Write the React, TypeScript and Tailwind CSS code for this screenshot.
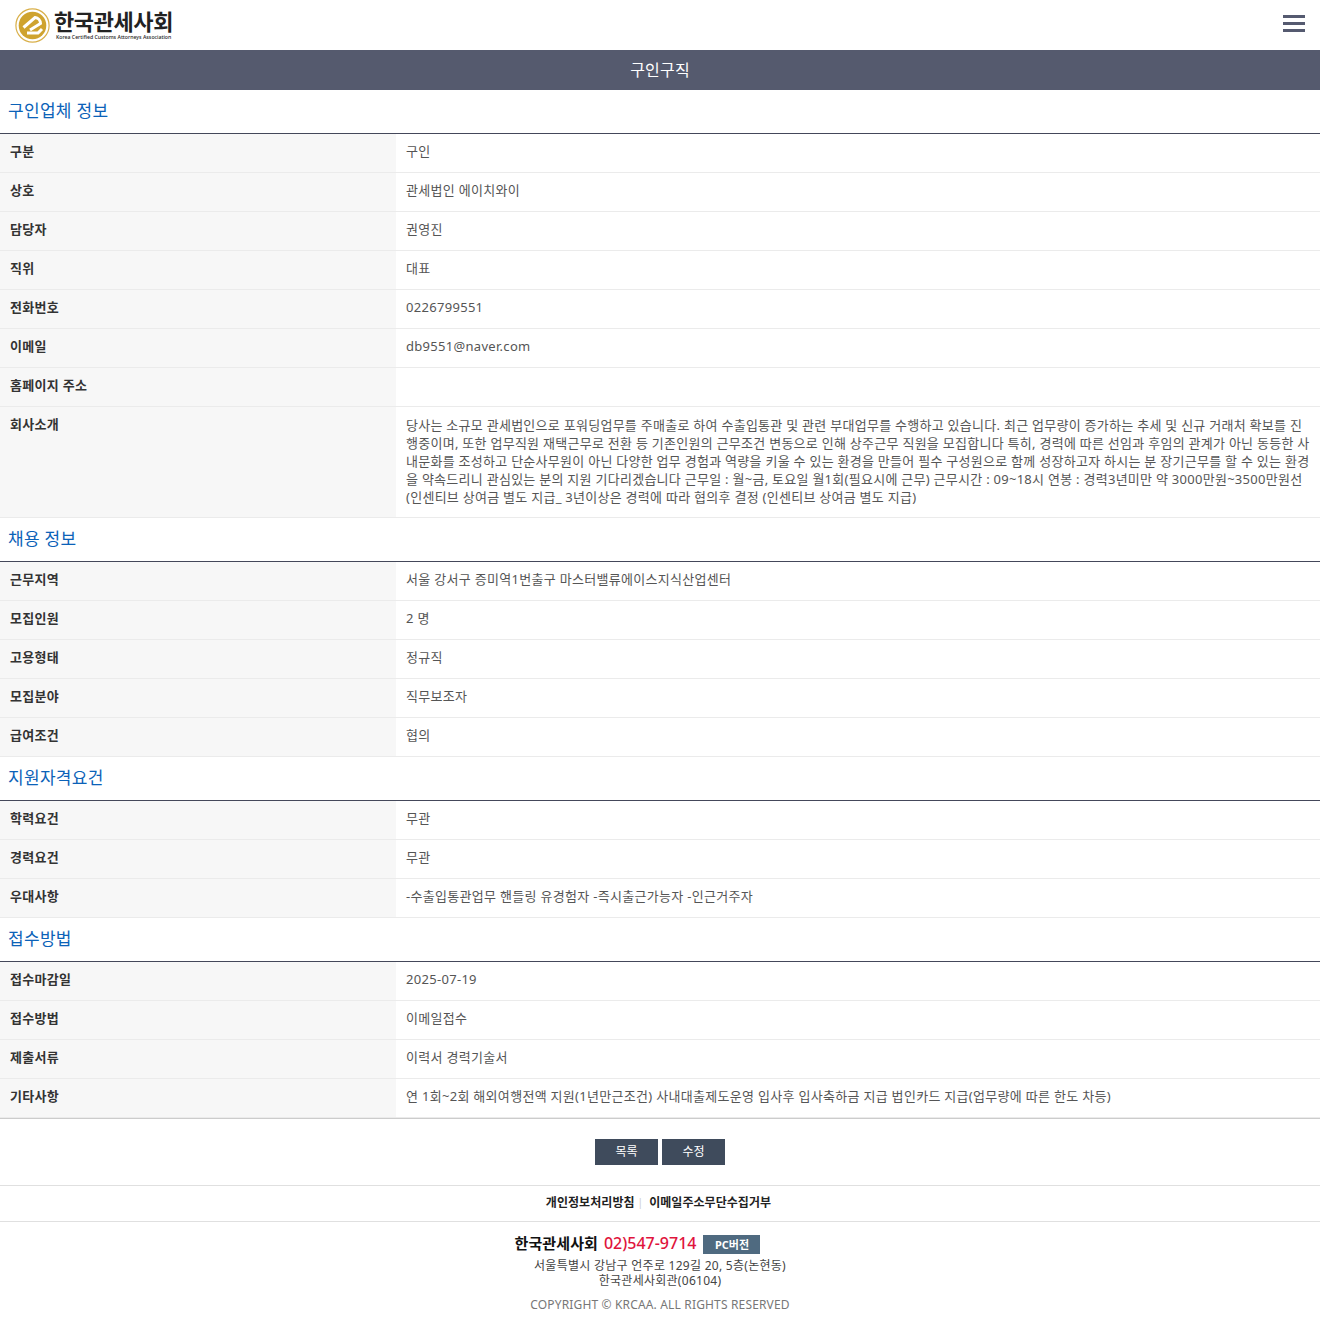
import React from "react";

const F = "font-['Noto_Sans','Noto_Sans_CJK_KR',sans-serif]";

function Row({ label, children, tall }: { label: string; children?: React.ReactNode; tall?: boolean }) {
  return (
    <div className="flex border-b border-[#ebebeb]">
      <div className="w-[396px] shrink-0 bg-[#f7f7f7] px-[10px] pt-[7px] pb-[11px] text-[13px] leading-[20px] font-bold text-[#333] tracking-[0.3px]">{label}</div>
      <div className={`flex-1 px-[10px] ${tall ? "pt-[9px] pb-[11px] leading-[18px] break-all tracking-[0.27px]" : "pt-[7px] pb-[11px] leading-[20px] tracking-[0.3px]"} text-[13px] text-[#555] min-h-[38px]`}>{children}</div>
    </div>
  );
}

function Section({ title, rows }: { title: string; rows: [string, string][] }) {
  return (
    <section>
      <h2 className="h-[44px] pl-2 text-[17px] leading-[42px] tracking-[0.3px] text-[#0b62b8] border-b border-[#44485a]">{title}</h2>
      {rows.map(([a, b]) => <Row key={a} label={a}>{b}</Row>)}
    </section>
  );
}

export default function App() {
  return (
    <div className={`${F} bg-white w-[1320px] h-[1326px] overflow-hidden`}>
      <header className="h-[50px] flex items-center justify-between pl-[15px] pr-[15px]">
        <div className="flex items-center gap-[4px]">
          <svg width="35" height="35" viewBox="0 0 35 35">
            <circle cx="17.5" cy="17.5" r="16.6" fill="#fff" stroke="#d9b04a" strokeWidth="1.2" />
            <circle cx="17.5" cy="17.5" r="13.8" fill="#cfa32f" />
            <path d="M8.5 19.5 L20 9.5 A6 6 0 0 1 25.5 15.5 L15 22" fill="none" stroke="#fff" strokeWidth="3" />
            <path d="M12 25 L23 25 L27 21" fill="none" stroke="#fff" strokeWidth="3" />
          </svg>
          <div className="w-[120px]">
            <div className="text-[22px] leading-[22px] font-semibold text-[#222] whitespace-nowrap tracking-[-0.4px]">한국관세사회</div>
            <div className="text-[5.2px] leading-[6px] mt-[2px] pl-[2px] font-medium text-[#222] whitespace-nowrap">Korea Certified Customs Attorneys Association</div>
          </div>
        </div>
        <div className="flex flex-col gap-[4px] mb-[3px]">
          <span className="block w-[22px] h-[3px] bg-[#555a70]" />
          <span className="block w-[22px] h-[3px] bg-[#555a70]" />
          <span className="block w-[22px] h-[3px] bg-[#555a70]" />
        </div>
      </header>
      <div className="h-[40px] bg-[#555a6e] text-white text-center text-[16px] leading-[40px] tracking-[0.2px]">구인구직</div>
      <Section title="구인업체 정보" rows={[["구분","구인"],["상호","관세법인 에이치와이"],["담당자","권영진"],["직위","대표"],["전화번호","0226799551"],["이메일","db9551@naver.com"],["홈페이지 주소",""]]} />
      <Row label="회사소개" tall>당사는 소규모 관세법인으로 포워딩업무를 주매출로 하여 수출입통관 및 관련 부대업무를 수행하고 있습니다. 최근 업무량이 증가하는 추세 및 신규 거래처 확보를 진행중이며, 또한 업무직원 재택근무로 전환 등 기존인원의 근무조건 변동으로 인해 상주근무 직원을 모집합니다 특히, 경력에 따른 선임과 후임의 관계가 아닌 동등한 사내문화를 조성하고 단순사무원이 아닌 다양한 업무 경험과 역량을 키울 수 있는 환경을 만들어 필수 구성원으로 함께 성장하고자 하시는 분 장기근무를 할 수 있는 환경을 약속드리니 관심있는 분의 지원 기다리겠습니다 근무일 : 월~금, 토요일 월1회(필요시에 근무) 근무시간 : 09~18시 연봉 : 경력3년미만 약 3000만원~3500만원선 (인센티브 상여금 별도 지급_ 3년이상은 경력에 따라 협의후 결정 (인센티브 상여금 별도 지급)</Row>
      <Section title="채용 정보" rows={[["근무지역","서울 강서구 증미역1번출구 마스터밸류에이스지식산업센터"],["모집인원","2 명"],["고용형태","정규직"],["모집분야","직무보조자"],["급여조건","협의"]]} />
      <Section title="지원자격요건" rows={[["학력요건","무관"],["경력요건","무관"],["우대사항","-수출입통관업무 핸들링 유경험자 -즉시출근가능자 -인근거주자"]]} />
      <Section title="접수방법" rows={[["접수마감일","2025-07-19"],["접수방법","이메일접수"],["제출서류","이력서 경력기술서"],["기타사항","연 1회~2회 해외여행전액 지원(1년만근조건) 사내대출제도운영 입사후 입사축하금 지급 법인카드 지급(업무량에 따른 한도 차등)"]]} />
      <div className="border-t border-[#ccc] h-[67px] flex justify-center items-start gap-[4px] pt-[20px]">
        <button className="w-[63px] h-[26px] bg-[#3f4b5c] text-white text-[12px]">목록</button>
        <button className="w-[63px] h-[26px] bg-[#3f4b5c] text-white text-[12px]">수정</button>
      </div>
      <div className="border-y border-[#e0e0e0] h-[37px] pb-[2px] pr-[3px] flex items-center justify-center text-[12px] font-bold text-[#222] tracking-[0.05px]">
        <span>개인정보처리방침</span><span className="text-[#ccc] font-normal text-[10px] ml-[3px]">|</span><span className="ml-[6px]">이메일주소무단수집거부</span>
      </div>
      <div className="text-center pt-[8px]">
        <div className="flex items-center justify-center h-[26px] mr-[45px]">
          <span className="text-[15px] font-bold text-[#111] tracking-[0.1px]">한국관세사회</span>
          <span className="text-[16px] font-medium text-[#e0143c] ml-[6px]">02)547-9714</span>
          <span className="w-[57px] h-[19px] ml-[7px] mt-[3px] bg-[#4f6a80] text-white text-[11px] font-bold leading-[19px]">PC버전</span>
        </div>
        <div className="text-[12px] leading-[15px] text-[#444] tracking-[0.27px] mt-[2px]">서울특별시 강남구 언주로 129길 20, 5층(논현동)</div>
        <div className="text-[12px] leading-[15px] text-[#444] tracking-[0.27px]">한국관세사회관(06104)</div>
        <div className="text-[12px] leading-[15px] text-[#777] mt-[9px] tracking-[0.16px]">COPYRIGHT © KRCAA. ALL RIGHTS RESERVED</div>
      </div>
    </div>
  );
}
